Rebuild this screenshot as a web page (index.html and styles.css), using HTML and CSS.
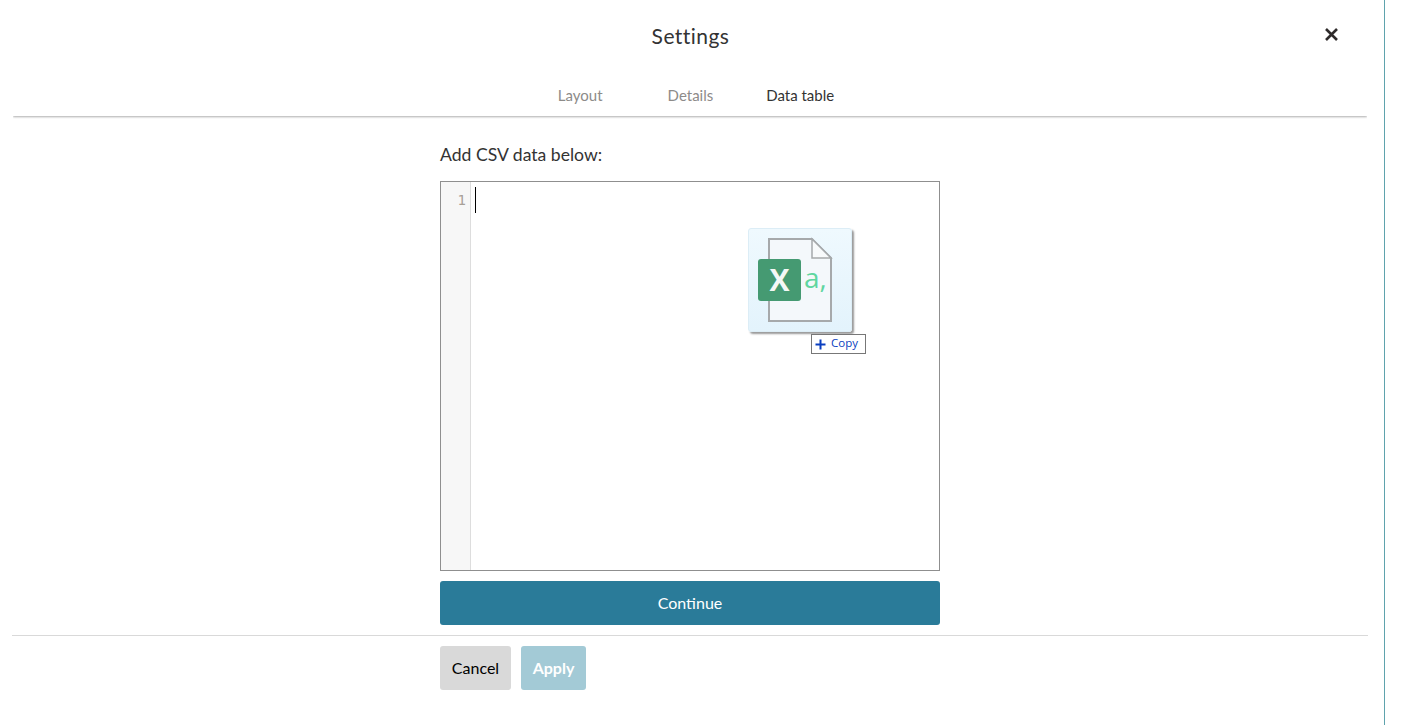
FILE: index.html
```html
<!DOCTYPE html>
<html lang="en">
<head>
<meta charset="utf-8">
<title>Settings</title>
<link rel="stylesheet" href="styles.css">
</head>
<body>
<div class="modal">
  <header class="head">
    <h1 class="title">Settings</h1>
    <button class="close" aria-label="Close">
      <svg width="13" height="13" viewBox="0 0 13 13"><path d="M1 1 12 12M12 1 1 12" stroke="#2f2b2b" stroke-width="2.6" fill="none"/></svg>
    </button>
  </header>
  <nav class="tabs">
    <a class="tab tab-layout">Layout</a>
    <a class="tab tab-details">Details</a>
    <a class="tab tab-on">Data table</a>
  </nav>
  <main class="body">
    <div class="column">
      <label class="label">Add CSV data below:</label>
      <div class="editor">
        <div class="gutter">1</div>
        <div class="code"><span class="caret"></span></div>
        <div class="ghost">
          <div class="ghost-card">
            <svg width="104" height="104" viewBox="0 0 104 104">
              <path d="M21 11H64L83 30V93H21Z" fill="#f4f8fb" stroke="#a6a9ab" stroke-width="2"/>
              <path d="M64 11V30H83Z" fill="#f8fafb" stroke="#a6a9ab" stroke-width="1.5"/>
              <rect x="10" y="31" width="43" height="42" rx="3" fill="#459a72"/>
              <text x="31.500" y="63" class="ghost-x" text-anchor="middle">X</text>
              <text x="56" y="60" class="ghost-a">a,</text>
            </svg>
          </div>
          <div class="copy">
            <svg width="11" height="11" viewBox="0 0 11 11"><path d="M5.500 0.500V10.500M0.500 5.500H10.500" stroke="#0a3fc0" stroke-width="2" fill="none"/></svg>
            <span class="copy-label">Copy</span>
          </div>
        </div>
      </div>
      <button class="continue">Continue</button>
    </div>
  </main>
  <footer class="foot">
    <div class="column actions">
      <button class="btn btn-cancel">Cancel</button>
      <button class="btn btn-apply">Apply</button>
    </div>
  </footer>
</div>
</body>
</html>
```
FILE: styles.css
```css
* { box-sizing: border-box; }
html, body { margin: 0; height: 100%; background: #fff; overflow: hidden; }
body { font-family: Lato, "Open Sans", sans-serif; color: #2f2b2b; }
.modal { width: 1385px; height: 725px; border-right: 1px solid #5fa3ad; padding: 0 16px 0 12px; display: flex; flex-direction: column; }
.head { position: relative; height: 72px; display: flex; justify-content: center; align-items: flex-start; padding-top: 22px; padding-left: 1px; }
.title { margin: 0; font-size: 21px; font-weight: 400; line-height: 27px; color: #333; letter-spacing: 0.45px; }
.close { position: absolute; right: 30px; top: 28px; padding: 0; border: 0; background: none; width: 13px; height: 13px; display: flex; }
.tabs { height: 44px; margin: 0 1px; display: flex; justify-content: center; align-items: flex-start; padding: 14px 0 0 12px; font-size: 15px; line-height: 18px; background: #fff; clip-path: inset(0 0 -3px 0); box-shadow: 0 1px 2px rgba(0,0,0,.32); }
.tab { color: #8d8b89; }
.tab-layout { margin-right: 65px; }
.tab-details { margin-right: 53px; }
.tab-on { color: #333; }
.body { display: flex; justify-content: center; padding-top: 28px; height: 520px; border-bottom: 1px solid #d9d9d9; }
.column { width: 500px; }
.label { display: block; font-size: 17.6px; line-height: 21px; color: #333; margin-bottom: 16px; }
.editor { position: relative; height: 390px; border: 1px solid #8f8f8f; display: flex; }
.gutter { width: 30px; background: #f7f7f7; border-right: 1px solid #ddd; text-align: right; padding: 10px 4px 0 0; font: 14px/17px "DejaVu Sans Mono", monospace; color: #a8a097; }
.code { flex: 1; padding: 5px 0 0 4px; }
.caret { display: block; width: 1px; height: 26px; background: #000; }
.ghost { position: absolute; left: 307px; top: 46px; width: 118px; height: 126px; }
.ghost-card { width: 104px; height: 104px; border-radius: 3px; background: linear-gradient(#eff9fe, #e3f3fc); box-shadow: 2px 2px 2px rgba(0,0,0,.4); border: 1px solid #dcedf6; overflow: hidden; }
.ghost-card svg { display: block; margin: -1px; }
.ghost-x { font: 700 30px "Open Sans", sans-serif; fill: #f4f8f6; }
.ghost-a { font: 400 28px "Open Sans", sans-serif; fill: #5fd6a0; }
.copy { position: absolute; left: 63px; top: 106px; width: 55px; height: 20px; background: #fff; border: 1px solid #777; display: flex; align-items: center; gap: 5px; padding-left: 3px; font: 11.5px/14px "Open Sans", sans-serif; color: #0a3fc0; }
.copy-label { padding-bottom: 2px; }
.continue { display: block; width: 500px; height: 44px; margin-top: 10px; border: 0; border-radius: 3px; background: #2a7b99; color: #fff; font: 400 16px/20px Lato, sans-serif; padding: 0 0 1px; }
.foot { display: flex; justify-content: center; padding-top: 10px; }
.actions { display: flex; gap: 10px; }
.btn { height: 44px; border: 0; border-radius: 3px; font: 400 16px/20px Lato, sans-serif; padding: 0 0 1px; }
.btn-cancel { width: 71px; background: #d9d9d9; color: #000; }
.btn-apply { width: 65px; background: #a3cad6; color: #fff; font-weight: 700; }
```
